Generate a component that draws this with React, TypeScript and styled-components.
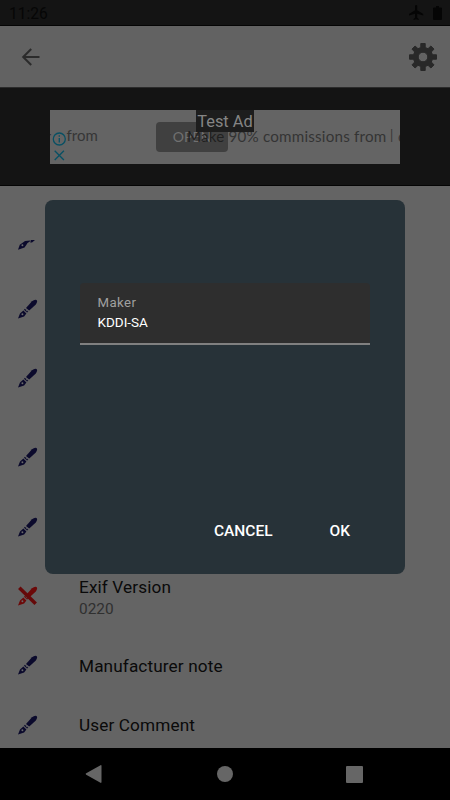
import React from "react";
import styled, { createGlobalStyle } from "styled-components";

const GlobalStyle = createGlobalStyle`
  * { box-sizing: border-box; }
  body { margin: 0; background: #000; font-family: Roboto, "Liberation Sans", sans-serif; }
`;

const Screen = styled.div`
  position: relative;
  width: 450px;
  height: 800px;
  overflow: hidden;
  display: flex;
  flex-direction: column;
  background: #646464;
`;

const StatusBar = styled.header`
  flex: none;
  height: 26px;
  padding: 0 8px 0 9px;
  display: flex;
  align-items: center;
  justify-content: space-between;
  background: #141414;
  border-bottom: 1px solid #050505;
  color: #060606;
  font-size: 15.6px;
  line-height: 25px;
  > span { padding-top: 3px; }
`;

const StatusIcons = styled.div`
  display: flex;
  align-items: center;
  gap: 9px;
  svg { display: block; }
`;

const Toolbar = styled.nav`
  flex: none;
  height: 62px;
  padding: 0 13px 0 19px;
  display: flex;
  align-items: center;
  justify-content: space-between;
  background: #626262;
  border-bottom: 1px solid #2b2b2b;
  svg { display: block; }
`;

const AdStrip = styled.section`
  flex: none;
  height: 98px;
  display: flex;
  justify-content: center;
  padding-top: 22px;
  background: #141414;
  border-bottom: 1px solid #050505;
`;

const Ad = styled.div`
  position: relative;
  width: 350px;
  height: 54px;
  overflow: hidden;
  background: #646464;
  font-family: Lato, sans-serif;
  white-space: nowrap;
`;

const AdCopy = styled.span<{ $x: number; $y: number; $size: number; $spacing?: number }>`
  position: absolute;
  left: ${(p) => p.$x}px;
  top: ${(p) => p.$y}px;
  font-size: ${(p) => p.$size}px;
  letter-spacing: ${(p) => p.$spacing ?? 0}px;
  line-height: 20px;
  color: #363636;
`;

const AdHeadline = styled(AdCopy)`
  color: #343434;
  em {
    font-style: normal;
    color: #202020;
  }
`;

const OpenButton = styled.div`
  position: absolute;
  left: 106px;
  top: 12px;
  width: 72px;
  height: 30px;
  border-radius: 4px;
  background: #404040;
  color: #707070;
  font-size: 14px;
  line-height: 29px;
  text-align: center;
`;

const TestLabel = styled.div`
  position: absolute;
  left: 146px;
  top: 0;
  width: 58px;
  height: 22px;
  background: #1d1d1d;
  color: #858585;
  font: 16.4px/23px Roboto, sans-serif;
  text-align: center;
`;

const AdMarks = styled.svg`
  position: absolute;
  left: 2px;
  top: 22px;
`;

const List = styled.main`
  flex: 1;
  min-height: 0;
  overflow: hidden;
  padding-top: 14px;
`;

const Row = styled.div<{ $tall?: boolean }>`
  height: ${(p) => (p.$tall ? 79.2 : 59.4)}px;
  display: grid;
  grid-template-columns: 61px 1fr;
  align-items: center;
  padding-left: 18px;
  svg { display: block; }
`;

const RowText = styled.div<{ $drop?: number }>`
  padding-top: ${(p) => p.$drop ?? 1}px;
`;

const Title = styled.div`
  font-size: 17.2px;
  line-height: 22px;
  letter-spacing: 0.12px;
  color: #0a0a0a;
`;

const Detail = styled.div`
  font-size: 15.4px;
  line-height: 22px;
  color: #303030;
`;

const NavBar = styled.footer`
  flex: none;
  height: 52px;
  padding: 0 87px 0 85px;
  display: flex;
  align-items: center;
  justify-content: space-between;
  background: #000;
  svg { display: block; }
`;

const Dialog = styled.div`
  position: absolute;
  left: 45px;
  top: 200px;
  width: 360px;
  height: 373.5px;
  padding: 83px 35px 23px;
  display: flex;
  flex-direction: column;
  justify-content: space-between;
  border-radius: 8px;
  background: #273238;
`;

const Field = styled.div`
  height: 61.5px;
  padding: 9.5px 17.5px 0;
  border-radius: 4px 4px 0 0;
  background: linear-gradient(#808080, #808080) 0 100% / 100% 2px no-repeat #2e2e2e;
`;

const FieldLabel = styled.div`
  font-size: 13.2px;
  line-height: 20px;
  letter-spacing: 0.42px;
  color: #a0a0a0;
`;

const FieldValue = styled.div`
  font-size: 13.5px;
  line-height: 18px;
  color: #fff;
`;

const Actions = styled.div`
  display: flex;
  justify-content: flex-end;
  gap: 57px;
  padding-right: 20px;
`;

const Action = styled.button`
  border: 0;
  padding: 0;
  background: none;
  color: #fff;
  font: 500 15.5px/40px Roboto, sans-serif;
`;

function Pen({ clipped, crossed }: { clipped?: boolean; crossed?: boolean }) {
  const dark = crossed ? "#6c0909" : "#0b0a2c";
  return (
    <svg width="20" height="20" viewBox="0 0 20 20">
      {clipped ? (
        <path
          d="M0 19.300 1.800 14.300 5 12 7 10.500 12.500 10 11.500 11.300 9.500 12.500 8.300 14.500 6.500 17ZM13 9.500 17 9.500 14 12 12.200 12Z"
          transform="translate(0 .5)"
          fill={dark}
        />
      ) : (
        <>
          <path d="M8 9 14 2.200Q17 -.1 18.600 1.100 19.900 2.800 17.600 5.800L11.200 11.600Z" fill={dark} />
          <path d="M6.800 9.700 10.300 12.700 9 13.600 6 10.800Z" fill={dark} />
          <path d="M0 19.400 2 14.400 5.400 11.600 8.400 14.400 6.100 17.400Z" fill={dark} />
          <circle cx="8.900" cy="11.400" r=".8" fill="#565660" />
        </>
      )}
      <circle cx="4.400" cy="15.300" r=".95" fill="#68686a" />
      {crossed && <path d="M1.300 1.800 17.700 17.700" stroke="#650909" strokeWidth="3.600" />}
    </svg>
  );
}

export default function App() {
  return (
    <Screen>
      <GlobalStyle />
      <StatusBar>
        <span>11:26</span>
        <StatusIcons>
          <svg width="15" height="15" viewBox="2 2 20 20" fill="#050505">
            <path d="M21 16v-2l-8-5V3.500a1.500 1.500 0 0 0-3 0V9l-8 5v2l8-2.500V19l-2 1.500V22l3.500-1 3.500 1v-1.500L13 19v-5.500z" />
          </svg>
          <svg width="9" height="14" viewBox="0 0 9 14" fill="#050505">
            <path d="M3 0h3v1.500h2q1 0 1 1V13q0 1-1 1H1q-1 0-1-1V2.500q0-1 1-1h2Z" />
          </svg>
        </StatusIcons>
      </StatusBar>
      <Toolbar>
        <svg width="24" height="24" viewBox="0 0 24 24" fill="none" stroke="#2b2b2b" strokeWidth="2">
          <path d="M20.500 12H4M12.200 4 4.200 12l8 8" />
        </svg>
        <svg width="28" height="28" viewBox="0 0 28 28" fill="#282828" stroke="#282828" strokeLinejoin="round">
          <path
            fillRule="evenodd"
            d="M11.800.5h4.400v4l2.800 1.200 2.900-2.700 3.100 3.100-2.700 2.900 1.200 2.800h4v4.400h-4l-1.200 2.800 2.700 2.900-3.100 3.100-2.900-2.700-2.800 1.200v4h-4.400v-4L9 22.300 6.100 25 3 21.900 5.700 19l-1.200-2.800h-4v-4.400h4L5.700 9 3 6.100 6.100 3 9 5.700l2.800-1.200ZM14 9.200a4.800 4.800 0 1 0 0 9.600 4.800 4.800 0 0 0 0-9.600Z"
          />
        </svg>
      </Toolbar>
      <AdStrip>
        <Ad>
          <AdCopy $x={-4} $y={16} $size={14}>r</AdCopy>
          <AdCopy $x={16.5} $y={15} $size={15}>from</AdCopy>
          <OpenButton>OPEN</OpenButton>
          <AdHeadline $x={137} $y={16} $size={15.2} $spacing={0.19}>
            <em>Make</em> 90% commissions from
          </AdHeadline>
          <AdCopy $x={340} $y={15} $size={13}>|</AdCopy>
          <AdCopy $x={348} $y={16} $size={15}>c</AdCopy>
          <TestLabel>Test Ad</TestLabel>
          <AdMarks width="15" height="31" viewBox="0 0 15 31" fill="none" stroke="#075064" strokeWidth="1.300">
            <circle cx="7.300" cy="7" r="6" />
            <path d="M7.300 6v4.500M7.300 3.300v1.400M2.700 18.800l9.200 9.200M11.900 18.800 2.700 28" />
          </AdMarks>
        </Ad>
      </AdStrip>
      <List>
        <Row $tall><Pen clipped /></Row>
        <Row><Pen /></Row>
        <Row $tall><Pen /></Row>
        <Row $tall><Pen /></Row>
        <Row><Pen /></Row>
        <Row $tall>
          <Pen crossed />
          <RowText $drop={5}>
            <Title>Exif Version</Title>
            <Detail>0220</Detail>
          </RowText>
        </Row>
        <Row><Pen /><RowText><Title>Manufacturer note</Title></RowText></Row>
        <Row><Pen /><RowText><Title>User Comment</Title></RowText></Row>
      </List>
      <NavBar>
        <svg width="18" height="18" viewBox="0 0 18 18" fill="#666">
          <path d="M1.200 8.300 15.500.2q1-.4 1 .7v16.200q0 1.100-1 .7L1.200 9.700q-1-.7 0-1.400Z" />
        </svg>
        <svg width="16" height="16" viewBox="0 0 16 16" fill="#666"><circle cx="8" cy="8" r="8" /></svg>
        <svg width="17" height="17" viewBox="0 0 17 17" fill="#666"><rect width="17" height="17" rx="1" /></svg>
      </NavBar>
      <Dialog role="dialog">
        <Field>
          <FieldLabel>Maker</FieldLabel>
          <FieldValue>KDDI-SA</FieldValue>
        </Field>
        <Actions>
          <Action>CANCEL</Action>
          <Action>OK</Action>
        </Actions>
      </Dialog>
    </Screen>
  );
}
